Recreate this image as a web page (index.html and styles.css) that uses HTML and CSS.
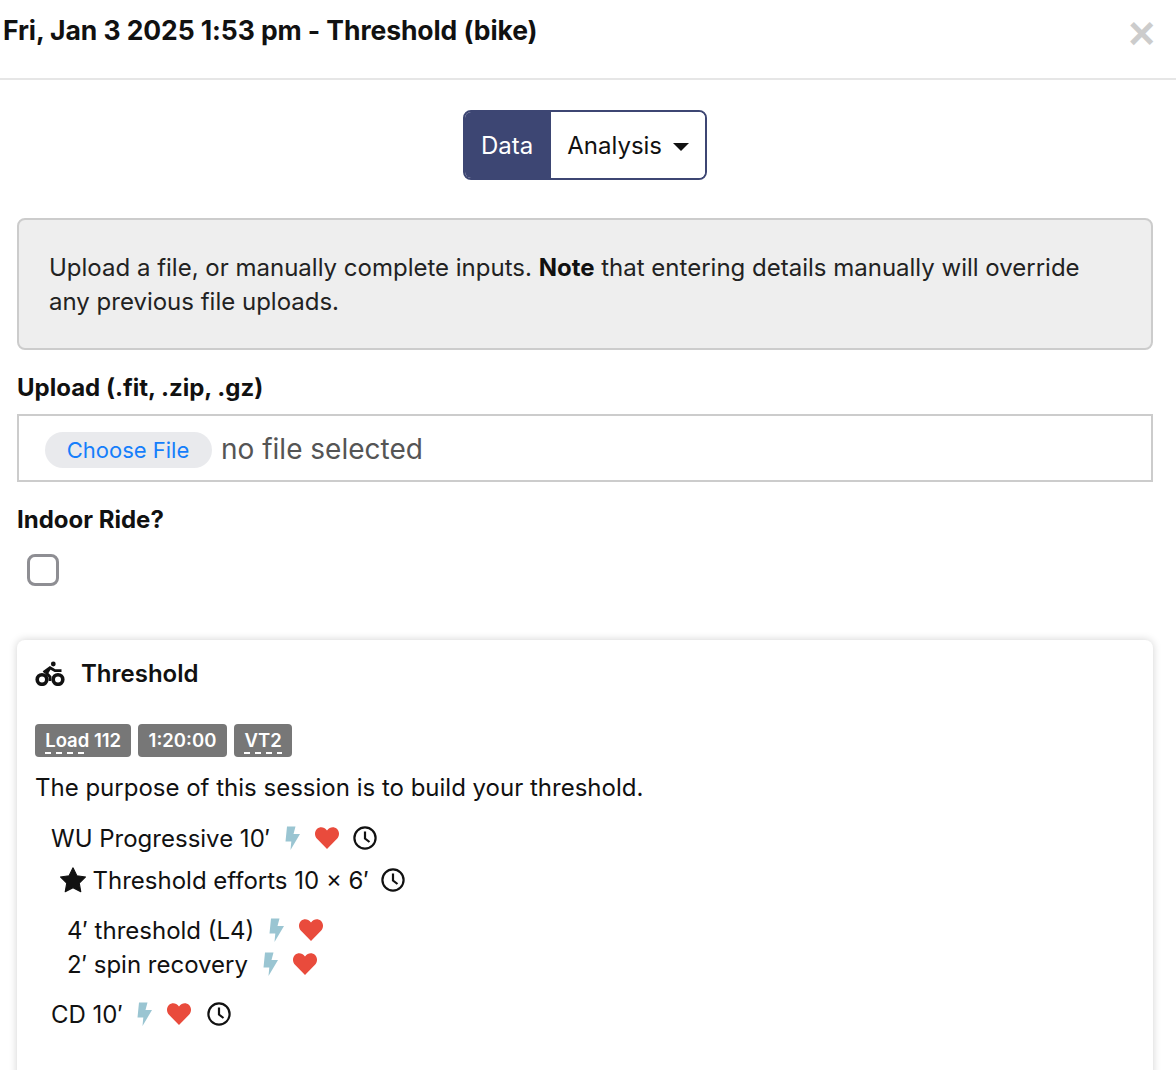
FILE: index.html
```html
<!DOCTYPE html>
<html lang="en">
<head>
    <meta charset="UTF-8">
    <meta name="viewport" content="width=device-width, initial-scale=1.0">
    <title>Threshold (bike)</title>
    <link rel="stylesheet" href="styles.css">
</head>
<body>
    <svg class="icon-defs" width="0" height="0">
        <symbol id="bolt" viewBox="0 0 16 24"><path d="M3 .5H11.5L9.5 8H16L6.5 24L7.3 15.5H1.5Z" stroke-linejoin="round"/></symbol>
        <symbol id="heart" viewBox="0 0 24 22"><path d="M12 22L2 11.8C-0.8 8.8 -0.6 4.2 2.2 1.8C5 -0.6 9.2 -0.2 12 3.4C14.8 -0.2 19 -0.6 21.8 1.8C24.6 4.2 24.8 8.8 22 11.8Z"/></symbol>
        <symbol id="clock" viewBox="0 0 24 24"><circle cx="12" cy="12" r="10.6" fill="none" stroke="currentColor" stroke-width="2.2"/><path d="M12 5.5V12.5L16.5 16" fill="none" stroke="currentColor" stroke-width="2.2"/></symbol>
    </svg>

    <header class="modal-header">
        <h1>Fri, Jan 3 2025 1:53 pm - Threshold (bike)</h1>
        <button class="close" type="button">&times;</button>
    </header>

    <main class="modal-body">
        <div class="toggle">
            <button class="toggle-item active" type="button">Data</button>
            <button class="toggle-item" type="button">Analysis <span class="caret"></span></button>
        </div>

        <div class="notice">
            Upload a file, or manually complete inputs. <strong>Note</strong> that entering details manually will override any previous file uploads.
        </div>

        <label class="field-label">Upload (.fit, .zip, .gz)</label>
        <div class="file-box">
            <span class="file-button">Choose File</span>
            <span class="file-name">no file selected</span>
        </div>

        <label class="field-label">Indoor Ride?</label>
        <div class="checkbox"></div>

        <section class="card">
            <div class="card-title">
                <svg class="bike" viewBox="0 0 30 26">
                    <circle cx="7" cy="19.5" r="4.8" fill="none" stroke="#111" stroke-width="3.6"/>
                    <circle cx="23" cy="19.5" r="4.8" fill="none" stroke="#111" stroke-width="3.6"/>
                    <circle cx="18.3" cy="4" r="2.4" fill="#111"/>
                    <path d="M8.5 12.3L15 7.7L20 10.7H26.5M15 7.7L11.7 13.3L15 16.7V21" fill="none" stroke="#111" stroke-width="2.8"/>
                </svg>
                <span>Threshold</span>
            </div>
            <div class="badges">
                <span class="badge"><span class="dashed">Load</span> 112</span>
                <span class="badge wide">1:20:00</span>
                <span class="badge wide"><span class="dashed">VT2</span></span>
            </div>
            <p class="purpose">The purpose of this session is to build your threshold.</p>

            <div class="step">
                <span>WU Progressive 10′</span>
                <svg class="ic bolt"><use href="#bolt"/></svg>
                <svg class="ic heart"><use href="#heart"/></svg>
                <svg class="ic clock"><use href="#clock"/></svg>
            </div>
            <div class="step main-set">
                <svg class="star" viewBox="0 0 24 24"><path d="M12 .8L15.6 8L23.6 9.2L17.8 14.9L19.2 22.9L12 19.1L4.8 22.9L6.2 14.9L.4 9.2L8.4 8Z" stroke="#111" stroke-width="1" stroke-linejoin="round"/></svg>
                <span>Threshold efforts 10 × 6′</span>
                <svg class="ic clock"><use href="#clock"/></svg>
            </div>
            <div class="sub-steps">
                <div class="step">
                    <span>4′ threshold (L4)</span>
                    <svg class="ic bolt"><use href="#bolt"/></svg>
                    <svg class="ic heart"><use href="#heart"/></svg>
                </div>
                <div class="step">
                    <span>2′ spin recovery</span>
                    <svg class="ic bolt"><use href="#bolt"/></svg>
                    <svg class="ic heart"><use href="#heart"/></svg>
                </div>
            </div>
            <div class="step cool-down">
                <span>CD 10′</span>
                <svg class="ic bolt"><use href="#bolt"/></svg>
                <svg class="ic heart"><use href="#heart"/></svg>
                <svg class="ic clock"><use href="#clock"/></svg>
            </div>
        </section>
    </main>
</body>
</html>
```

FILE: styles.css
```css
html, body {
    margin: 0;
    height: 1070px;
    overflow: hidden;
    background-color: #fff;
}
body {
    font-family: "Inter", sans-serif;
    color: #111;
    font-size: 24px;
}
.icon-defs {
    position: absolute;
}
.modal-header {
    display: flex;
    justify-content: space-between;
    height: 78px;
    border-bottom: 2px solid #e6e6e6;
    padding: 0 21px 0 3px;
}
.modal-header h1 {
    margin: 14px 0 0;
    font-size: 26.5px;
    line-height: 32px;
    font-weight: 700;
    letter-spacing: -0.08px;
}
.close {
    border: none;
    background: none;
    padding: 0;
    height: 36px;
    margin-top: 15px;
    color: #ccc;
    font-size: 46px;
    line-height: 36px;
    font-weight: 700;
    font-family: "Liberation Sans", sans-serif;
}
.modal-body {
    padding: 30px 23px 0 17px;
}
.toggle {
    display: flex;
    width: 244px;
    height: 70px;
    box-sizing: border-box;
    margin: 0 auto 38px;
    border: 2px solid #3d4673;
    border-radius: 8px;
    overflow: hidden;
}
.toggle-item {
    border: none;
    background: #fff;
    color: #111;
    font-family: inherit;
    font-size: 24px;
    padding: 0 16px;
    white-space: nowrap;
}
.toggle-item.active {
    padding: 0 18px 0 16px;
    background-color: #3d4673;
    color: #fff;
}
.caret {
    display: inline-block;
    width: 0;
    height: 0;
    margin-left: 4px;
    vertical-align: 3px;
    border-top: 8px solid #111;
    border-left: 8px solid transparent;
    border-right: 8px solid transparent;
}
.notice {
    box-sizing: border-box;
    height: 132px;
    padding: 31px 40px 0 30px;
    background-color: #eee;
    border: 2px solid #ccc;
    border-radius: 8px;
    line-height: 34px;
    color: #222;
}
.notice strong {
    color: #111;
}
.field-label {
    display: block;
    margin-top: 23px;
    font-weight: 700;
    line-height: 30px;
}
.file-box {
    box-sizing: border-box;
    display: flex;
    align-items: center;
    height: 68px;
    margin-top: 11px;
    padding-left: 26px;
    border: 2px solid #ccc;
}
.file-button {
    box-sizing: border-box;
    width: 167px;
    height: 36px;
    margin-top: 4px;
    padding-right: 1px;
    border-radius: 18px;
    background-color: #e9eaed;
    color: #157efb;
    font-size: 22px;
    line-height: 36px;
    text-align: center;
}
.file-name {
    margin-left: 9px;
    margin-top: 2px;
    font-size: 28px;
    color: #555;
}
.checkbox {
    box-sizing: border-box;
    width: 32px;
    height: 32px;
    margin: 19px 0 54px 10px;
    border: 3px solid #8e8e93;
    border-radius: 8px;
}
.card {
    box-sizing: border-box;
    height: 460px;
    padding: 17px 18px 0;
    border-radius: 8px;
    box-shadow: 0 0 8px rgba(0, 0, 0, 0.18);
}
.card-title {
    display: flex;
    align-items: center;
    height: 32px;
    font-weight: 600;
}
.bike {
    width: 30px;
    height: 26px;
    margin-right: 16px;
}
.badges {
    display: flex;
    gap: 6.5px;
    margin-top: 35px;
}
.badge {
    height: 33px;
    padding: 0 10.2px;
    border-radius: 4px;
    background-color: #777;
    color: #fff;
    font-size: 18.5px;
    font-weight: 600;
    line-height: 32px;
    white-space: nowrap;
}
.badge.wide {
    padding: 0 10.8px;
}
.badge .dashed {
    display: inline-block;
    height: 30px;
    background: repeating-linear-gradient(90deg, #fff 0 6px, transparent 6px 11px) left bottom / 100% 2px no-repeat;
}
.purpose {
    margin: 14px 0 0;
    line-height: 34px;
}
.step {
    display: flex;
    align-items: center;
    height: 34px;
    margin: 16px 0 0 16px;
}
.main-set {
    margin: 8px 0 0 25px;
}
.sub-steps {
    margin: 16px 0 16px 32px;
}
.sub-steps .step {
    margin: 0;
}
.ic {
    width: 24px;
    height: 24px;
}
.ic.bolt {
    width: 16px;
    fill: #9ac5d2;
    margin-left: 14px;
}
.ic.heart {
    width: 24px;
    height: 22px;
    fill: #e94b3c;
    margin-left: 15px;
}
.ic.clock {
    color: #111;
    margin-left: 14px;
}
.main-set .ic.clock {
    margin-left: 12px;
}
.cool-down .ic.bolt {
    margin-left: 13px;
}
.cool-down .ic.clock {
    margin-left: 16px;
}
.star {
    width: 26px;
    height: 26px;
    fill: #111;
    margin-right: 6.5px;
}
```
